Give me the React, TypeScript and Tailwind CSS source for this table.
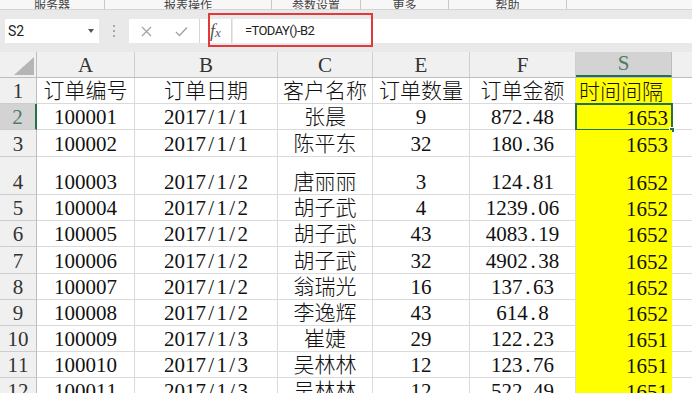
import React from 'react'

const cols = [
  { key: 'A', w: 'w-[98px]' },
  { key: 'B', w: 'w-[143px]' },
  { key: 'C', w: 'w-[95px]' },
  { key: 'E', w: 'w-[97px]' },
  { key: 'F', w: 'w-[106px]' },
  { key: 'S', w: 'w-[96px]' },
]

const rows: { h: string; cells: string[] }[] = [
  { h: 'h-[26px]', cells: ['订单编号', '订单日期', '客户名称', '订单数量', '订单金额', '时间间隔'] },
  { h: 'h-[26px]', cells: ['100001', '2017/1/1', '张晨', '9', '872.48', '1653'] },
  { h: 'h-[27px]', cells: ['100002', '2017/1/1', '陈平东', '32', '180.36', '1653'] },
  { h: 'h-[38px]', cells: ['100003', '2017/1/2', '唐丽丽', '3', '124.81', '1652'] },
  { h: 'h-[26px]', cells: ['100004', '2017/1/2', '胡子武', '4', '1239.06', '1652'] },
  { h: 'h-[26px]', cells: ['100005', '2017/1/2', '胡子武', '43', '4083.19', '1652'] },
  { h: 'h-[27px]', cells: ['100006', '2017/1/2', '胡子武', '32', '4902.38', '1652'] },
  { h: 'h-[26px]', cells: ['100007', '2017/1/2', '翁瑞光', '16', '137.63', '1652'] },
  { h: 'h-[26px]', cells: ['100008', '2017/1/2', '李逸辉', '43', '614.8', '1652'] },
  { h: 'h-[26px]', cells: ['100009', '2017/1/3', '崔婕', '29', '122.23', '1651'] },
  { h: 'h-[26px]', cells: ['100010', '2017/1/3', '吴林林', '12', '123.76', '1651'] },
  { h: 'h-[26px]', cells: ['100011', '2017/1/3', '吴林林', '12', '522.49', '1651'] },
]

const ribbon = [
  { label: '服务器', w: 'w-[105px]' },
  { label: '报表操作', w: 'w-[167px]' },
  { label: '参数设置', w: 'w-[89px]' },
  { label: '更多', w: 'w-[88px]' },
  { label: '帮助', w: 'w-[118px]' },
]

// half-width chars, the way SimSun spaces latin text
function Half({ text }: { text: string }) {
  return (
    <>
      {text.split('').map((c, i) => (
        <span key={i} className="inline-block w-[0.5em] text-center">
          {c}
        </span>
      ))}
    </>
  )
}

function CellText({ text }: { text: string }) {
  if (/^[\x00-\x7f]+$/.test(text)) return <Half text={text} />
  return <span className="font-light">{text}</span>
}

export default function App() {
  return (
    <div className="w-[692px] h-[393px] overflow-hidden bg-white relative">
      {/* ribbon tail */}
      <div className="h-[10px] flex bg-[#f7f7f7] border-b border-[#d4d4d4] overflow-hidden font-['Noto_Sans_CJK_SC',sans-serif] text-[12px] text-[#444]">
        {ribbon.map((r) => (
          <div key={r.label} className={`${r.w} h-[9px] flex items-end justify-center border-r border-[#c9c9c9]`}>
            <span className="leading-[14px] -mb-[3px]">{r.label}</span>
          </div>
        ))}
      </div>

      {/* formula bar */}
      <div className="h-[42px] bg-[#e9e9e9] flex items-start pt-[9px] font-['Roboto',sans-serif]">
        <div className="ml-[5px] w-[94px] h-[24px] bg-white flex items-center justify-between pl-[3px] pr-[5px]">
          <span className="text-[14px] text-[#222]">S2</span>
          <svg width="6" height="4" viewBox="0 0 6 4">
            <path d="M0 0 L6 0 L3 4 Z" fill="#555" />
          </svg>
        </div>
        <div className="w-[30px] h-[24px] flex flex-col items-center justify-center gap-[3px]">
          <span className="w-[2px] h-[2px] bg-[#a8a8a8]" />
          <span className="w-[2px] h-[2px] bg-[#a8a8a8]" />
          <span className="w-[2px] h-[2px] bg-[#a8a8a8]" />
        </div>
        <div className="w-[103px] h-[24px] bg-white flex items-center">
          <div className="w-[34px] flex justify-center">
            <svg width="11" height="11" viewBox="0 0 11 11">
              <path d="M1 1 L10 10 M10 1 L1 10" stroke="#a3a3a3" strokeWidth="1.3" />
            </svg>
          </div>
          <div className="w-[36px] flex justify-center">
            <svg width="13" height="11" viewBox="0 0 13 11">
              <path d="M1 6 L4.5 9.5 L12 1.5" stroke="#a3a3a3" strokeWidth="1.4" fill="none" />
            </svg>
          </div>
          <div className="flex-1 h-full flex items-center justify-center border-l border-[#d6d6d6] border-r">
            <span className="font-['Liberation_Serif',serif] italic text-[18px] text-[#555] leading-none">
              f<span className="text-[13px]">x</span>
            </span>
          </div>
        </div>
        <div className="flex-1 ml-px h-[24px] bg-white flex items-center pl-[12px]">
          <span className="text-[13px] text-[#222] tracking-[-0.6px]">=TODAY()-B2</span>
        </div>
      </div>

      {/* annotation */}
      <div className="absolute left-[208px] top-[13px] w-[165px] h-[34px] border-2 border-[#e23a3a]" />

      {/* sheet */}
      <div className="font-['Liberation_Serif','Noto_Sans_CJK_SC',serif] text-[21px] text-[#111]">
        <div className="flex h-[26px] bg-[#f0f0f0] border-b border-[#bdbdbd]">
          <div className="w-[37px] shrink-0 border-r border-[#bdbdbd] relative">
            <svg className="absolute right-[2px] bottom-[2px]" width="20" height="18" viewBox="0 0 20 18">
              <path d="M20 0 L20 18 L0 18 Z" fill="#b5b5b5" />
            </svg>
          </div>
          {cols.map((c) => (
            <div
              key={c.key}
              className={`${c.w} shrink-0 flex items-end justify-center leading-[23px] ${
                c.key === 'S'
                  ? 'bg-[#d3d3d3] text-[#4f7c66] border-b-2 border-[#217346] border-r border-r-[#bdbdbd]'
                  : 'text-[#333] border-r border-[#cfcfcf]'
              }`}
            >
              {c.key}
            </div>
          ))}
          <div className="flex-1" />
        </div>

        {rows.map((r, ri) => (
          <div key={ri} className={`flex ${r.h}`}>
            <div
              className={`w-[37px] shrink-0 flex items-end justify-center leading-[23px] border-b border-[#cdcdcd] ${
                ri === 1
                  ? 'bg-[#d3d3d3] text-[#4f7c66] border-r-2 border-r-[#217346]'
                  : 'bg-[#f0f0f0] text-[#333] border-r border-r-[#bdbdbd]'
              }`}
            >
              <Half text={String(ri + 1)} />
            </div>
            {r.cells.map((v, ci) => {
              const isS = ci === 5
              const align = isS ? (ri === 0 ? 'justify-start pl-[3px]' : 'justify-end pr-[4px]') : 'justify-center'
              return (
                <div
                  key={ci}
                  className={`${cols[ci].w} shrink-0 flex items-end whitespace-nowrap leading-[23px] relative ${align} ${
                    isS ? 'bg-[#ffff00]' : 'border-r border-b border-[#dadada]'
                  }`}
                >
                  <span>
                    <CellText text={v} />
                  </span>
                  {isS && ri === 1 && (
                    <div className="absolute -left-px -top-px -right-px -bottom-px border-2 border-[#217346]">
                      <div className="absolute -right-[4px] -bottom-[4px] w-[6px] h-[6px] bg-[#217346] border border-white" />
                    </div>
                  )}
                </div>
              )
            })}
            <div className="flex-1 border-b border-[#dadada]" />
          </div>
        ))}
      </div>
    </div>
  )
}
